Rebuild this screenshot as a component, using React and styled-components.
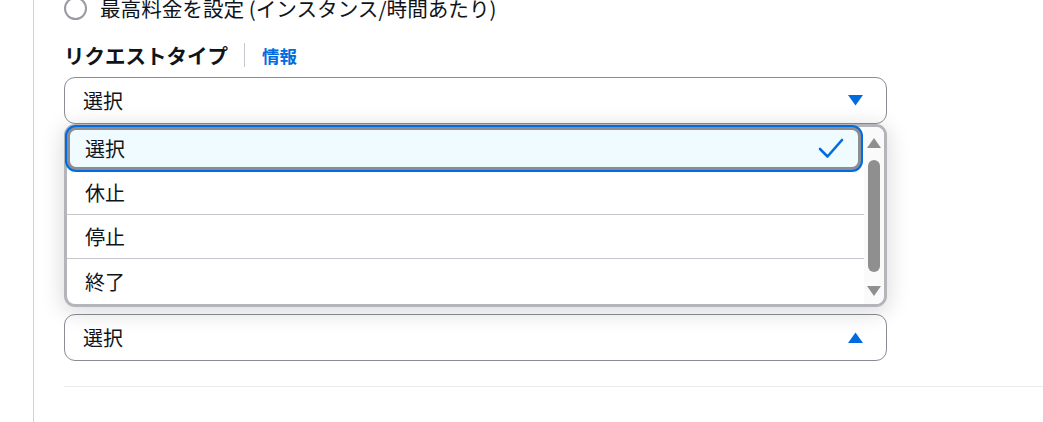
import React from "react";
import styled, { createGlobalStyle } from "styled-components";

const GlobalStyle = createGlobalStyle`
  html, body {
    margin: 0;
    padding: 0;
    background: #ffffff;
  }
  body {
    font-family: "Noto Sans CJK JP", "Noto Sans", sans-serif;
    color: #0f141a;
    overflow: hidden;
  }
`;

const Page = styled.div`
  display: flex;
  height: 422px;
  overflow: hidden;
`;

const Rail = styled.div`
  flex: none;
  width: 33px;
  border-right: 1px solid #d1d1d6;
`;

const Main = styled.div`
  flex: 1;
  display: flex;
  flex-direction: column;
  padding-left: 30px;
  margin-top: -6px;
`;

const Column = styled.div`
  width: 823px;
  display: flex;
  flex-direction: column;
`;

const RadioRow = styled.label`
  display: flex;
  align-items: center;
  gap: 13px;
  height: 28px;
  font-size: 20.6px;
  line-height: 28px;
`;

const RadioCircle = styled.span`
  flex: none;
  box-sizing: border-box;
  width: 23px;
  height: 23px;
  border-radius: 50%;
  border: 2px solid #9a9aa2;
  background: #fff;
`;

const LabelRow = styled.div`
  display: flex;
  align-items: center;
  height: 28px;
  margin-top: 19px;
`;

const Label = styled.span`
  font-size: 20.5px;
  font-weight: 700;
  line-height: 28px;
`;

const LabelDivider = styled.span`
  width: 1px;
  height: 24px;
  background: #c6c6cd;
  margin: 0 17px 0 16px;
`;

const InfoLink = styled.a`
  font-size: 17.5px;
  font-weight: 700;
  color: #006ce0;
  text-decoration: none;
`;

const Field = styled.div`
  position: relative;
  margin-top: ${(p) => p.$gap}px;
`;

const Select = styled.div`
  box-sizing: border-box;
  height: 47px;
  display: flex;
  align-items: center;
  justify-content: space-between;
  padding: 0 23px 0 18px;
  border: 1px solid #8c8c94;
  border-radius: 11px;
  background: #fff;
  font-size: 20px;
`;

const Dropdown = styled.div`
  position: absolute;
  top: 47px;
  left: 0;
  right: 0;
  height: 183px;
  box-sizing: border-box;
  display: flex;
  border: 3px solid #b4b4bb;
  border-radius: 11px;
  background: #fff;
  box-shadow: 0 4px 22px 2px rgba(0, 7, 22, 0.14);
  z-index: 5;
`;

const List = styled.div`
  flex: 1;
  display: flex;
  flex-direction: column;
`;

const Option = styled.div`
  box-sizing: border-box;
  display: flex;
  align-items: center;
  justify-content: space-between;
  font-size: 20px;
  padding: 0 18px;
  height: ${(p) => p.$h}px;
  border-top: ${(p) => (p.$sep ? "1px solid #c6c6cd" : "none")};
  border-bottom-left-radius: ${(p) => (p.$last ? "8px" : "0")};
`;

const SelectedOption = styled(Option)`
  position: relative;
  z-index: 1;
  margin-right: 3px;
  padding: 0 14px 0 15px;
  border: 3px solid #8c8c94;
  border-radius: 9px;
  background: #f0fbff;
  box-shadow: 0 0 0 2px #006ce0;
`;

const Scrollbar = styled.div`
  flex: none;
  width: 20px;
  display: flex;
  flex-direction: column;
  align-items: center;
  background: #fafafa;
  border-top-right-radius: 8px;
  border-bottom-right-radius: 8px;
`;

const Thumb = styled.div`
  width: 12px;
  height: 112px;
  margin-top: 12px;
  border-radius: 6px;
  background: #8f8f8f;
`;

const Arrow = styled.svg`
  display: block;
  flex: none;
  margin-top: ${(p) => p.$mt || 0}px;
`;

const Rule = styled.div`
  height: 1px;
  background: #e9ebed;
  margin-top: 25px;
`;

const Caret = ({ up }) => (
  <svg width="15" height="11" viewBox="0 0 15 11">
    <polygon
      points={up ? "7.5,0.5 15,11 0,11" : "0,0 15,0 7.5,10.5"}
      fill="#006ce0"
    />
  </svg>
);

const Check = () => (
  <svg width="26" height="22" viewBox="0 0 26 22">
    <polyline
      points="2,11 9.5,18.5 24,2"
      fill="none"
      stroke="#006ce0"
      strokeWidth="2.6"
      strokeLinecap="round"
      strokeLinejoin="round"
    />
  </svg>
);

const options = [
  { text: "休止", h: 44 },
  { text: "停止", h: 44, sep: true },
  { text: "終了", h: 46, sep: true, last: true },
];

export default function App() {
  return (
    <>
      <GlobalStyle />
      <Page>
        <Rail />
        <Main>
          <Column>
            <RadioRow>
              <RadioCircle />
              最高料金を設定 (インスタンス/時間あたり)
            </RadioRow>

            <LabelRow>
              <Label>リクエストタイプ</Label>
              <LabelDivider />
              <InfoLink href="#">情報</InfoLink>
            </LabelRow>

            <Field $gap={8}>
              <Select>
                選択
                <Caret />
              </Select>
              <Dropdown>
                <List>
                  <SelectedOption $h={43}>
                    選択
                    <Check />
                  </SelectedOption>
                  {options.map((o) => (
                    <Option key={o.text} $h={o.h} $sep={o.sep} $last={o.last}>
                      {o.text}
                    </Option>
                  ))}
                </List>
                <Scrollbar>
                  <Arrow $mt={11} width="14" height="10" viewBox="0 0 14 10">
                    <polygon points="7,0 14,10 0,10" fill="#8f8f8f" />
                  </Arrow>
                  <Thumb />
                  <Arrow $mt={14} width="14" height="10" viewBox="0 0 14 10">
                    <polygon points="0,0 14,0 7,10" fill="#8f8f8f" />
                  </Arrow>
                </Scrollbar>
              </Dropdown>
            </Field>

            <Field $gap={190}>
              <Select>
                選択
                <Caret up />
              </Select>
            </Field>
          </Column>
          <Rule />
        </Main>
      </Page>
    </>
  );
}
